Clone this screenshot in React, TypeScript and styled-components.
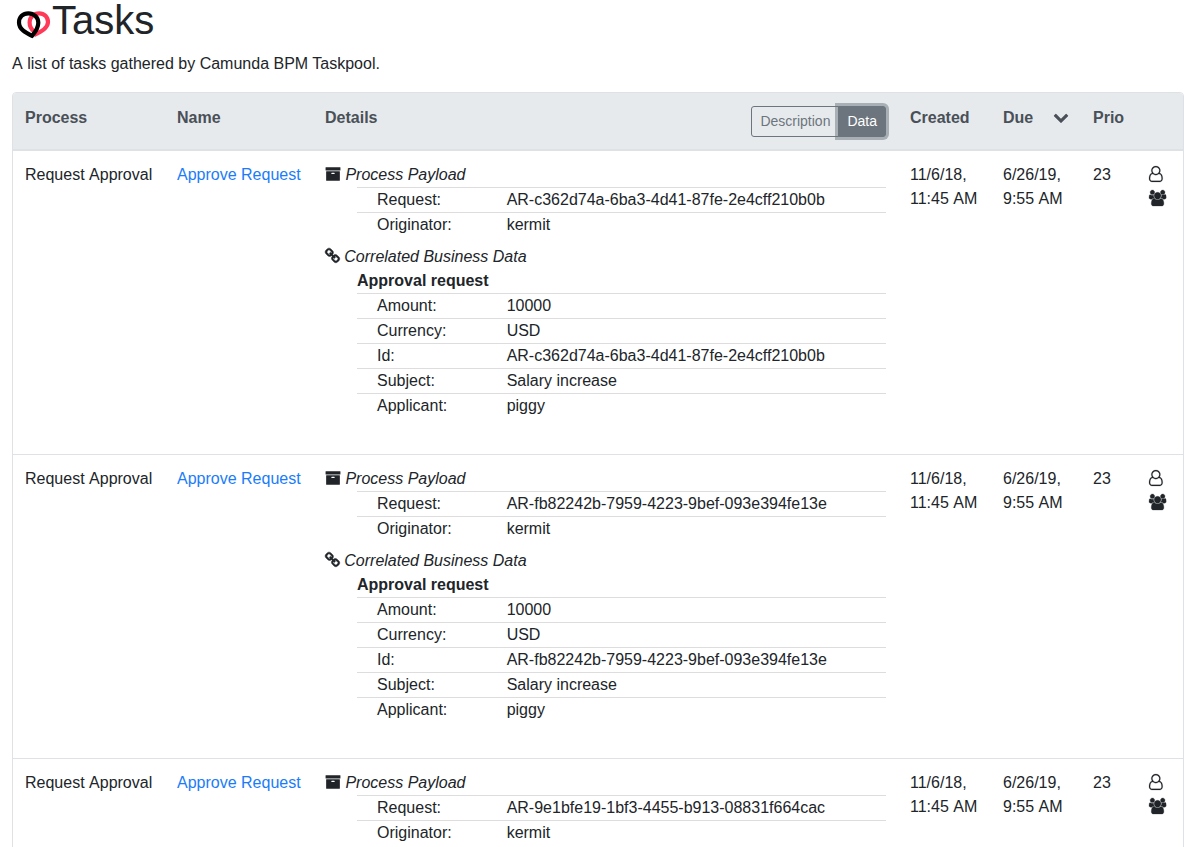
import React from "react";
import styled, { createGlobalStyle, css } from "styled-components";

const GlobalStyle = createGlobalStyle`
  *, *::before, *::after { box-sizing: border-box; }
  html, body { margin: 0; overflow: hidden; }
  body {
    background: #fff;
    color: #212529;
    font: 400 16px/24px "Liberation Sans", Arial, sans-serif;
  }
`;

const Page = styled.main`
  height: 847px;
  overflow: hidden;
  padding-left: 12px;
`;

const Title = styled.h1`
  display: flex;
  margin: 0 0 8px;
  font-size: 40px;
  font-weight: 400;
  line-height: 48px;
  height: 44px;
  align-items: flex-start;
`;

const TitleText = styled.span`
  margin-top: -4px;
`;

const Logo = styled.svg`
  width: 40px;
  height: 40px;
  margin-top: 4px;
`;

const Intro = styled.p`
  margin: 0 0 16px;
`;

const Article = styled.span`
  margin-right: 0.02px;
`;

const Table = styled.div`
  border: 1px solid #dee2e6;
  border-radius: 4px;
  overflow: hidden;
`;

const columns = css`
  display: grid;
  grid-template-columns: 152px 148px 585px 93px 90px 56px 1fr;
`;

const HeaderRow = styled.div`
  ${columns}
  height: 58px;
  background: #e7eaed;
  border-bottom: 2px solid #dee2e6;
  color: #495057;
  font-weight: 700;
`;

const Row = styled.div`
  ${columns}
  height: 304px;
  border-bottom: 1px solid #dee2e6;
`;

const Cell = styled.div<{ $loose?: boolean }>`
  padding: 12px;
  word-spacing: ${({ $loose }) => ($loose ? "0.9px" : "normal")};
`;

const HeaderCell = styled(Cell)`
  display: flex;
  justify-content: space-between;
  align-items: flex-start;
  padding-top: 13px;
`;

const ButtonGroup = styled.div`
  display: flex;
`;

const ToggleButton = styled.button<{ $active?: boolean }>`
  height: 31px;
  padding: 4px 8px;
  border: 1px solid #6c757d;
  border-radius: 3px 0 0 3px;
  background: transparent;
  color: #6c757d;
  font: 400 14px/21px "Liberation Sans", Arial, sans-serif;
  ${({ $active }) =>
    $active &&
    css`
      margin-left: -1px;
      border-radius: 0 3px 3px 0;
      background: #6c757d;
      color: #fff;
      box-shadow: 0 0 0 3px rgba(108, 117, 125, 0.5);
    `}
`;

const TaskLink = styled.a`
  color: #1a7cf9;
  text-decoration: none;
`;

const Section = styled.section`
  margin-bottom: 8px;
`;

const SectionTitle = styled.div`
  display: flex;
  gap: 4.45px;
  height: 24px;
  font-style: italic;
`;

const Indented = styled.div`
  margin-left: 32px;
`;

const GroupName = styled.div`
  font-weight: 700;
`;

const Field = styled.div`
  display: grid;
  grid-template-columns: 129.65px 1fr;
  padding-left: 20px;
  border-top: 1px solid #ddd;
  height: 25px;
`;

const IconBox = styled.svg<{ $weight: number }>`
  display: block;
  height: 16px;
  margin-top: 3px;
  fill: currentColor;
  stroke: currentColor;
  stroke-width: ${({ $weight }) => $weight};
  overflow: visible;
  flex: none;
`;

const icons = {
  archive: {
    box: "0 0 1792 1792",
    width: 16,
    weight: 0,
    d: "M1088 832q0-26-19-45t-45-19h-256q-26 0-45 19t-19 45 19 45 45 19h256q26 0 45-19t19-45zm576-192v960q0 26-19 45t-45 19h-1408q-26 0-45-19t-19-45v-960q0-26 19-45t45-19h1408q26 0 45 19t19 45zm64-448v256q0 26-19 45t-45 19h-1536q-26 0-45-19t-19-45v-256q0-26 19-45t45-19h1536q26 0 45 19t19 45z",
  },
  link: {
    box: "64 0 1664 1792",
    width: 14.86,
    weight: 60,
    d: "M1520 1216q0-40-28-68l-208-208q-28-28-68-28-42 0-72 32 3 3 19 18.5t21.5 21.5 15 19 13 25.5 3.5 27.5q0 40-28 68t-68 28q-15 0-27.5-3.5t-25.5-13-19-15-21.5-21.5-18.5-19q-33 31-33 73 0 40 28 68l206 207q27 27 68 27 40 0 68-26l147-146q28-28 28-67zm-703-705q0-40-28-68l-206-207q-28-28-68-28-39 0-68 27l-147 146q-28 28-28 67 0 40 28 68l208 208q27 27 68 27 42 0 72-31-3-3-19-18.5t-21.5-21.5-15-19-13-25.5-3.5-27.5q0-40 28-68t68-28q15 0 27.5 3.5t25.5 13 19 15 21.5 21.5 18.5 19q33-31 33-73zm895 705q0 120-85 203l-147 146q-83 83-203 83-121 0-204-85l-206-207q-83-83-83-203 0-123 88-209l-88-88q-86 88-208 88-120 0-204-84l-208-208q-84-84-84-204t85-203l147-146q83-83 203-83 121 0 204 85l206 207q83 83 83 203 0 123-88 209l88 88q86-88 208-88 120 0 204 84l208 208q84 84 84 204z",
  },
  chevron: {
    box: "0 0 1792 1792",
    width: 16,
    weight: 0,
    d: "M1683 808l-742 741q-19 19-45 19t-45-19l-742-741q-19-19-19-45.5t19-45.5l166-165q19-19 45-19t45 19l531 531 531-531q19-19 45-19t45 19l166 165q19 19 19 45.5t-19 45.5z",
  },
  user: {
    box: "128 0 1536 1792",
    width: 13.71,
    weight: 20,
    d: "M1329 784q47 14 89.5 38t89 73 79.5 115.5 55 172 22 236.5q0 154-100 263.5t-241 109.5h-854q-141 0-241-109.5t-100-263.5q0-131 22-236.5t55-172 79.5-115.5 89-73 89.5-38q-79-125-79-272 0-104 40.5-198.5t109.5-163.5 163.5-109.5 198.5-40.5 198.5 40.5 163.5 109.5 109.5 163.5 40.5 198.5q0 147-79 272zm-433-656q-159 0-271.5 112.5t-112.5 271.5 112.5 271.5 271.5 112.5 271.5-112.5 112.5-271.5-112.5-271.5-271.5-112.5zm427 1536q88 0 150.5-71.5t62.5-173.5q0-239-78.5-377t-225.5-145q-145 127-336 127t-336-127q-147 7-225.5 145t-78.5 377q0 102 62.5 173.5t150.5 71.5h854z",
  },
  users: {
    box: "64 0 1920 1792",
    width: 17.14,
    weight: 30,
    d: "M657 896q-162 5-265 128h-134q-82 0-138-40.5t-56-118.5q0-353 124-353 6 0 43.5 21t97.5 42.5 119 21.5q67 0 133-23-5 37-5 66 0 159 93 293zm1071 637q0 120-73 189.5t-194 69.5h-874q-121 0-194-69.5t-73-189.5q0-53 3.5-103.5t14-109 26.5-108.5 43-97.5 62-81 85.5-53.5 111.5-20q10 0 43 21.5t73 48 107 48 135 21.5 135-21.5 107-48 73-48 43-21.5q61 0 111.5 20t85.5 53.5 62 81 43 97.5 26.5 108.5 14 109 3.5 103.5zm-1024-1277q0 106-75 181t-181 75-181-75-75-181 75-181 181-75 181 75 75 181zm704 384q0 159-112.5 271.5t-271.5 112.5-271.5-112.5-112.5-271.5 112.5-271.5 271.5-112.5 271.5 112.5 112.5 271.5zm576 225q0 78-56 118.5t-138 40.5h-134q-103-123-265-128 93-134 93-293 0-29-5-66 66 23 133 23 59 0 119-21.5t97.5-42.5 43.5-21q124 0 124 353zm-128-609q0 106-75 181t-181 75-181-75-75-181 75-181 181-75 181 75 75 181z",
  },
};

const Icon = ({ name }: { name: keyof typeof icons }) => (
  <IconBox
    viewBox={icons[name].box}
    width={icons[name].width}
    $weight={icons[name].weight}
    preserveAspectRatio="none"
  >
    <path d={icons[name].d} />
  </IconBox>
);

const UserIcons = styled.div`
  display: flex;
  flex-direction: column;
  gap: 5px;
`;

const requestIds = [
  "AR-c362d74a-6ba3-4d41-87fe-2e4cff210b0b",
  "AR-fb82242b-7959-4223-9bef-093e394fe13e",
  "AR-9e1bfe19-1bf3-4455-b913-08831f664cac",
];

const Fields = ({ items }: { items: [string, string][] }) => (
  <>
    {items.map(([label, value]) => (
      <Field key={label}>
        <span>{label}:</span>
        <span>{value}</span>
      </Field>
    ))}
  </>
);

const TaskRow = ({ id }: { id: string }) => (
  <Row>
    <Cell $loose>Request Approval</Cell>
    <Cell>
      <TaskLink>Approve Request</TaskLink>
    </Cell>
    <Cell>
      <Section>
        <SectionTitle>
          <Icon name="archive" />
          Process Payload
        </SectionTitle>
        <Indented>
          <Fields items={[["Request", id], ["Originator", "kermit"]]} />
        </Indented>
      </Section>
      <Section>
        <SectionTitle>
          <Icon name="link" />
          Correlated Business Data
        </SectionTitle>
        <Indented>
          <GroupName>Approval request</GroupName>
          <Fields
            items={[
              ["Amount", "10000"],
              ["Currency", "USD"],
              ["Id", id],
              ["Subject", "Salary increase"],
              ["Applicant", "piggy"],
            ]}
          />
        </Indented>
      </Section>
    </Cell>
    <Cell $loose>11/6/18, 11:45 AM</Cell>
    <Cell $loose>6/26/19, 9:55 AM</Cell>
    <Cell>23</Cell>
    <Cell>
      <UserIcons>
        <Icon name="user" />
        <Icon name="users" />
      </UserIcons>
    </Cell>
  </Row>
);

export default function App() {
  return (
    <>
      <GlobalStyle />
      <Page>
        <Title>
          <Logo viewBox="0 0 40 40" fill="none" strokeWidth="4.2">
            <path
              stroke="#ff3a58"
              d="M22 31 C28 28.500 36 24.500 36 18 C36 12.800 32.200 9.300 27.200 9.300 C21.500 9.300 17.600 13.500 17.600 18.500 C17.600 22.500 19 25 22 27.500"
            />
            <path
              stroke="#000"
              d="M20 31.800 C14 29 7 25.500 7 18.500 C7 13 11 9.300 16.300 9.300 C22 9.300 26.300 13.500 26.300 18.800 C26.300 24.500 23 28.500 20 31.800Z"
            />
          </Logo>
          <TitleText>Tasks</TitleText>
        </Title>
        <Intro>
          <Article>A</Article> list of tasks gathered by Camunda BPM Taskpool.
        </Intro>
        <Table>
          <HeaderRow>
            <HeaderCell>Process</HeaderCell>
            <HeaderCell>Name</HeaderCell>
            <HeaderCell>
              Details
              <ButtonGroup>
                <ToggleButton>Description</ToggleButton>
                <ToggleButton $active>Data</ToggleButton>
              </ButtonGroup>
            </HeaderCell>
            <HeaderCell>Created</HeaderCell>
            <HeaderCell>
              Due
              <Icon name="chevron" />
            </HeaderCell>
            <HeaderCell>Prio</HeaderCell>
            <HeaderCell />
          </HeaderRow>
          {requestIds.map((id) => (
            <TaskRow key={id} id={id} />
          ))}
        </Table>
      </Page>
    </>
  );
}
